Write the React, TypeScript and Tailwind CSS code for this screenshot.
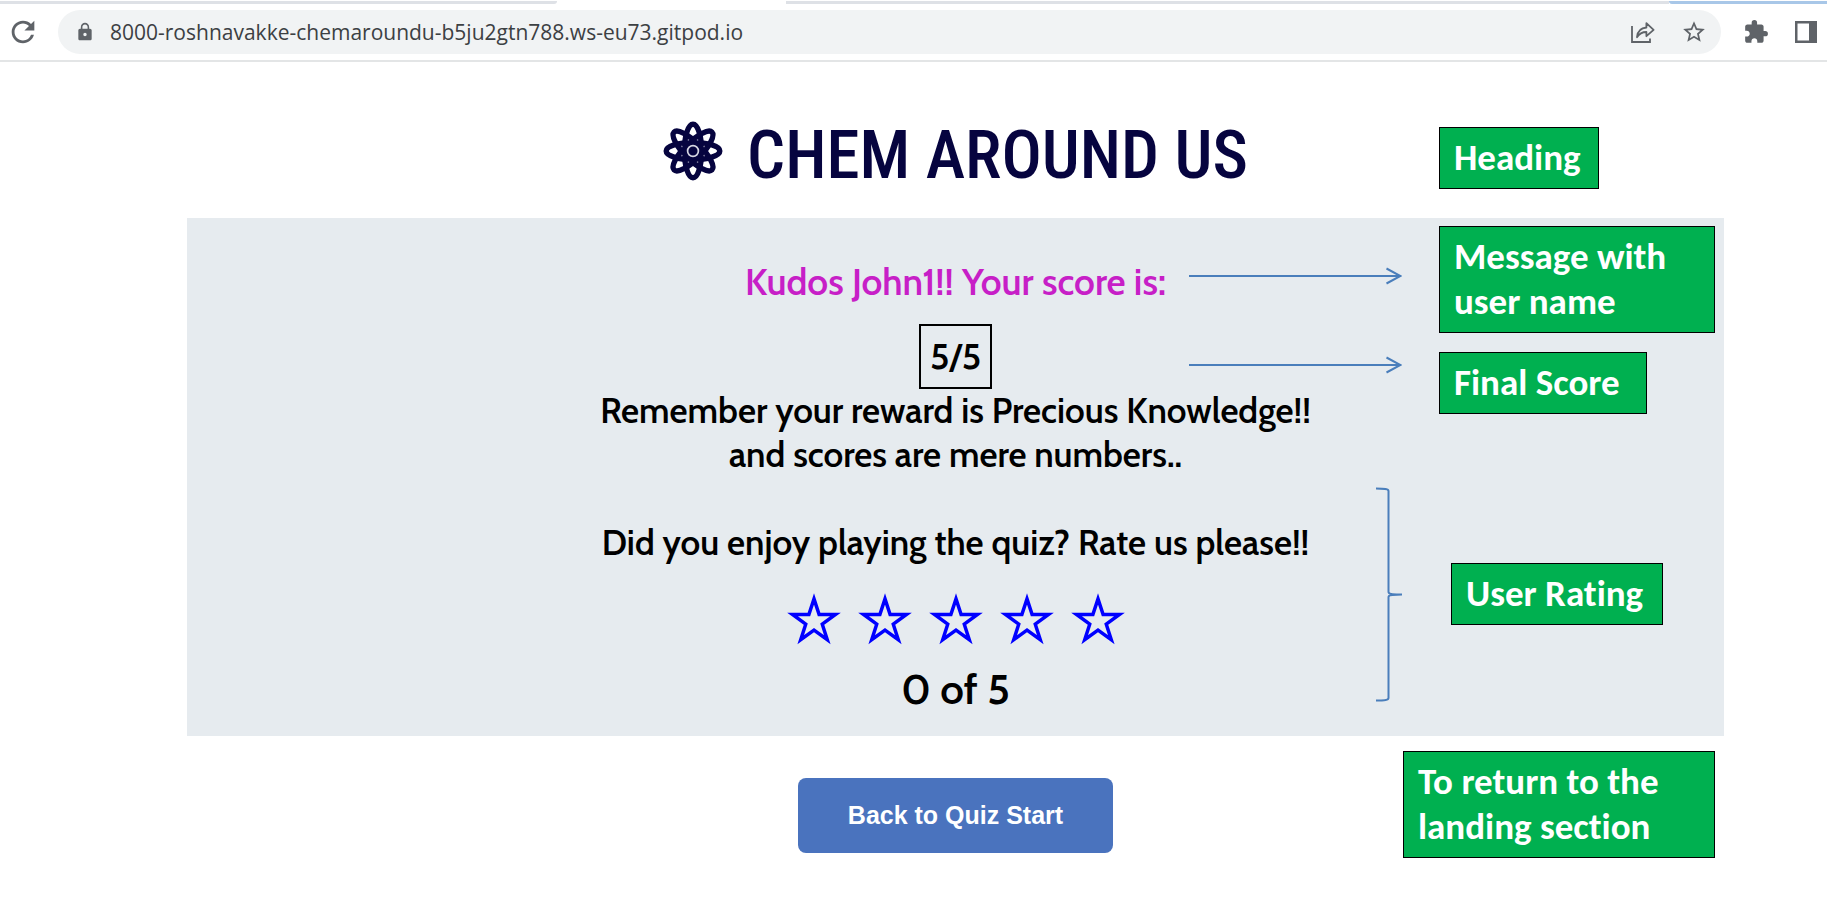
import { useState } from "react";
import type { ReactNode } from "react";
import { MdExtension, MdLock, MdRefresh, MdStarBorder } from "react-icons/md";

const starPoints = Array.from({ length: 10 }, (_, i) => {
  const r = i % 2 === 0 ? 22.6 : 8.7;
  const a = (Math.PI * i) / 5;
  return `${(27 + r * Math.sin(a)).toFixed(2)},${(28.5 - r * Math.cos(a)).toFixed(2)}`;
}).join(" ");

function Star({ filled }: { filled: boolean }) {
  return (
    <svg viewBox="0 0 54 52" className="h-[52px] w-[54px]" aria-hidden="true">
      <polygon points={starPoints} fill={filled ? "#0000ff" : "none"} stroke="#0000ff" strokeWidth="3.5" strokeMiterlimit="10" />
    </svg>
  );
}

function AtomIcon() {
  return (
    <svg viewBox="-30 -30 60 60" className="mt-1.5 size-[60px] shrink-0" fill="none" aria-hidden="true">
      {[0, 45, 90, 135].map((a) => (
        <ellipse key={a} rx="26.8" ry="8.6" stroke="#06043f" strokeWidth="5.4" transform={`rotate(${a})`} />
      ))}
      <circle r="14" fill="#06043f" />
      <circle r="5.4" stroke="#d6d6e2" strokeWidth="1.7" />
      {[22.5, 67.5, 112.5, 157.5, 202.5, 247.5, 292.5, 337.5].map((a) => (
        <circle key={a} cx="12" r="0.8" fill="#7d7c9c" transform={`rotate(${a})`} />
      ))}
    </svg>
  );
}

function ShareIcon() {
  return (
    <svg viewBox="0 0 24 24" className="size-6" fill="none" stroke="#5f6368" strokeWidth="1.8" aria-hidden="true">
      <path d="M1 6v16h18v-3.5" />
      <path d="M6 17.2c.6-6 3.900-9.300 9.400-9.700V3.200l7.200 6.600-7.200 6.400v-4.200c-4.200 0-7.200 1.600-9.400 5.200z" strokeLinejoin="round" />
    </svg>
  );
}

function SidePanelIcon() {
  return (
    <svg viewBox="0 0 22 22" className="size-[22px]" aria-hidden="true">
      <path fill="#5f6368" fillRule="evenodd" d="M0 0h22v22H0zM2.500 2.500v17h11.500v-17z" />
    </svg>
  );
}

function Callout({ place, children }: { place: string; children: ReactNode }) {
  return (
    <div
      className={`absolute border border-black bg-[#00b050] pt-[7px] pr-[15px] pb-2 pl-3.5 text-left font-['Carlito','Lato',sans-serif] text-[37px] leading-[45px] font-bold text-white [font-variant-ligatures:none] ${place}`}
    >
      {children}
    </div>
  );
}

function Arrow({ place }: { place: string }) {
  return (
    <svg viewBox="0 0 213 18" className={`absolute h-[18px] w-[213px] ${place}`} fill="none" stroke="#4a7ebb" strokeWidth="2" aria-hidden="true">
      <path d="M0 9h211M197.500 1.500L211.500 9l-14 7.500" />
    </svg>
  );
}

export default function App() {
  const [rating, setRating] = useState(0);
  return (
    <div className="min-h-screen bg-white">
      <header className="border-b-2 border-[#e3e5e6]">
        <div className="flex h-1 pt-px">
          <span className="w-[30.5%] rounded-br bg-[#dee1e6]" />
          <span className="w-[12.5%]" />
          <span className="flex-1 bg-[#dee1e6]" />
          <span className="w-[158px] rounded-bl bg-[#a8c7e8]" />
        </div>
        <div className="flex items-center py-1.5 pr-2.5 pl-1.5">
          <button type="button" aria-label="Reload" className="mr-[18px] text-[#5f6368]">
            <MdRefresh className="size-[34px]" />
          </button>
          <div className="flex h-11 flex-1 items-center rounded-full bg-[#f1f3f4] pr-3.5 pl-[17px] text-[#5f6368]">
            <MdLock className="size-5 shrink-0" />
            <input
              aria-label="Address"
              defaultValue="8000-roshnavakke-chemaroundu-b5ju2gtn788.ws-eu73.gitpod.io"
              className="ml-[15px] min-w-0 flex-1 bg-transparent pt-0.5 font-['Open_Sans',sans-serif] text-[21px] text-[#3c4043] outline-none"
            />
            <button type="button" aria-label="Share">
              <ShareIcon />
            </button>
            <button type="button" aria-label="Bookmark" className="ml-[26px]">
              <MdStarBorder className="size-[26px]" />
            </button>
          </div>
          <button type="button" aria-label="Extensions" className="ml-[22px] text-[#5f6368]">
            <MdExtension className="size-[26px]" />
          </button>
          <button type="button" aria-label="Side panel" className="ml-[26px]">
            <SidePanelIcon />
          </button>
        </div>
      </header>

      <main className="mr-[103px] ml-[187px] pt-[53px] text-center font-['Cabin','Lato',sans-serif] font-semibold text-black">
        <div className="relative flex justify-center gap-6 pb-[23px]">
          <AtomIcon />
          <h1 className="font-['Roboto_Condensed','Roboto',sans-serif] text-[67px] leading-[80px] font-medium text-[#06043f]">CHEM AROUND US</h1>
          <Callout place="top-3 right-[125px] w-40">Heading</Callout>
        </div>

        <section className="relative flex flex-col items-center bg-[#e6ebef] pt-[42px] pb-[21px] text-[35px] leading-[44px]">
          <h2 className="text-[37px] text-[#c71fc7]">Kudos John1!! Your score is:</h2>
          <p className="mt-5 border-2 border-black px-[9px] pt-2 pb-[9px] text-[36px]">5/5</p>
          <p>
            Remember your reward is Precious Knowledge!!
            <br />
            and scores are mere numbers..
          </p>
          <p className="mt-11">Did you enjoy playing the quiz? Rate us please!!</p>
          <div className="mt-7 flex gap-[17px]">
            {[1, 2, 3, 4, 5].map((n) => (
              <button key={n} type="button" aria-label={`Rate ${n} of 5`} onClick={() => setRating(n)}>
                <Star filled={n <= rating} />
              </button>
            ))}
          </div>
          <p className="mt-[18px] text-[42px] leading-[52px]">{rating} of 5</p>

          <Arrow place="top-[49px] right-[322px]" />
          <Arrow place="top-[138px] right-[322px]" />
          <svg viewBox="0 0 26 216" className="absolute top-[269px] right-[322px] h-[216px] w-[26px]" fill="none" stroke="#4a7ebb" strokeWidth="2" aria-hidden="true">
            <path d="M0 1.500C9 1.500 12.500 2 12.500 4v101c0 2 4 2.500 13.500 2.500-9.500 0-13.500.5-13.500 2.500v101c0 2-3.500 2.500-12.500 2.500" />
          </svg>
          <Callout place="top-2 right-[9px] w-[276px]">Message with user name</Callout>
          <Callout place="top-[134px] right-[77px] w-[208px]">Final Score</Callout>
          <Callout place="top-[345px] right-[61px] w-[212px]">User Rating</Callout>
        </section>

        <div className="relative flex justify-center pt-[42px]">
          <button type="button" className="h-[75px] rounded-lg bg-[#4a73be] px-[50px] font-['Liberation_Sans',Arial,sans-serif] text-[25px] font-bold text-white">
            Back to Quiz Start
          </button>
          <Callout place="top-[15px] right-[9px] w-[312px]">To return to the landing section</Callout>
        </div>
      </main>
    </div>
  );
}
